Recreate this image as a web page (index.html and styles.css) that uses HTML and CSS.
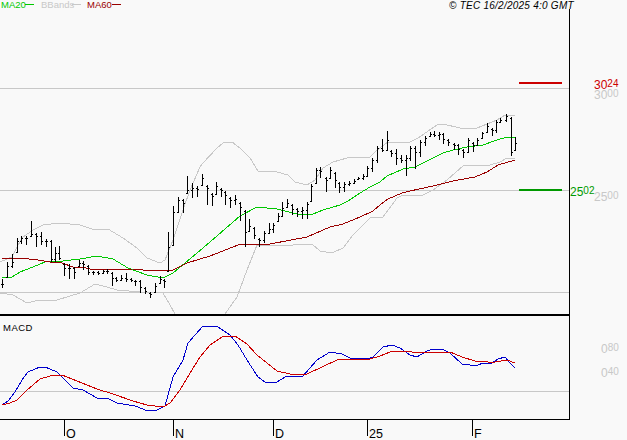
FILE: index.html
```html
<!DOCTYPE html>
<html lang="en">
<head>
    <meta charset="UTF-8">
    <title>Chart</title>
    <link rel="stylesheet" href="styles.css">
</head>
<body>
    <svg class="chart" width="627" height="440" viewBox="0 0 627 440" xmlns="http://www.w3.org/2000/svg">
        <!-- legend -->
        <text class="legend ma20" x="1" y="8">MA20</text>
        <path class="thin ma20-line" d="M25 4.5H34"/>
        <text class="legend bb" x="41" y="8">BBands</text>
        <path class="thin bb-line" d="M72 4.5H81"/>
        <text class="legend ma60" x="87" y="8">MA60</text>
        <path class="thin ma60-line" d="M112 4.5H121"/>
        <text class="copy" x="449" y="9.2">© TEC 16/2/2025 4:0 GMT</text>

        <!-- grid -->
        <path class="grid" d="M0 88.5H569M0 190.5H569M0 292.5H569M0 391.5H569"/>

        <!-- frame and time ticks -->
        <path class="frame" d="M569.5 9V419M0 419.5H570"/>
        <path class="sep" d="M0 315H570"/>
        <path class="frame" d="M64.5 419V436M173.5 419V436M273.5 419V436M367.5 419V436M472.5 419V436"/>
        <text class="axis" x="66" y="438">O</text>
        <text class="axis" x="175" y="438">N</text>
        <text class="axis" x="275" y="438">D</text>
        <text class="axis" x="369" y="438">25</text>
        <text class="axis" x="474" y="438">F</text>

        <!-- price levels -->
        <path class="level-hi" d="M519 83H562"/>
        <path class="level-lo" d="M519 190H562"/>
        <text class="val hi" x="594" y="89">30<tspan class="small" dy="-2">24</tspan></text>
        <text class="val lo" x="570" y="196">25<tspan class="small" dy="-2">02</tspan></text>
        <text class="val scale" x="594" y="99">30<tspan class="small" dy="-2">00</tspan></text>
        <text class="val scale" x="594" y="201">25<tspan class="small" dy="-2">00</tspan></text>
        <text class="val scale" x="601" y="353">0<tspan class="small" dy="-2">80</tspan></text>
        <text class="val scale" x="601" y="377">0<tspan class="small" dy="-2">40</tspan></text>

        <!-- bollinger bands -->
        <polyline class="line bb-line" points="0,262 12,257 17,247 23,237 33,230 43,225 60,223 80,225 92,229 108,229 123,238 137,248 147,258 160,263 165,260 173,240 183,210 190,190 200,167 203,163 217,148 223,143 232,142 240,148 250,158 258,171 277,172 288,175 295,182 307,185 315,180 323,168 333,162 347,158 370,157 377,150 388,142 410,142 418,138 437,125 443,124 460,128 477,128 497,120 505,115 515,116"/>
        <polyline class="line bb-line" points="0,293 13,295 27,303 35,301 57,300 80,293 95,284 107,287 117,290 140,292 163,293 170,305 175,314"/>
        <polyline class="line bb-line" points="225,314 237,297 247,270 257,245 273,245 293,245 312,244 320,251 332,253 343,248 353,235 370,218 383,217 397,198 403,195 423,195 433,190 447,180 463,166 490,165 500,162 507,158 515,158"/>

        <!-- moving averages -->
        <polyline class="line ma20-line" points="2,277 12,277 20,272 33,267 45,262 63,261 80,259 97,256 113,259 128,268 147,275 163,278 173,273 185,263 203,248 240,216 257,207 277,209 293,213 303,215 313,214 323,210 340,205 348,201 360,193 370,187 380,182 387,176 403,169 415,167 427,161 443,153 453,150 467,147 483,145 497,140 507,137 515,137"/>
        <polyline class="line ma60-line" points="2,259 20,258 38,260 50,262 62,263 73,267 83,267 93,270 133,269 143,270 160,271 173,270 187,263 210,256 238,245 270,244 307,237 330,227 343,224 360,217 373,211 380,205 388,199 402,193 410,191 433,186 453,181 475,177 487,172 498,165 515,160"/>

        <path class="bars" id="bars"/>

        <!-- macd -->
        <text class="macd-title" x="3" y="331">MACD</text>
        <polyline class="line macd-blue" points="2,405 8,401 15,392 22,380 28,372 40,367 45,367 57,372 65,380 73,388 83,390 97,398 107,398 117,403 135,406 148,411 157,410 165,406 173,377 183,360 188,343 203,326 210,326 218,327 230,335 238,345 247,360 258,377 265,382 275,383 287,376 303,376 310,368 317,360 330,352 342,354 350,358 367,359 373,357 383,347 392,345 400,348 410,355 417,357 420,355 427,351 433,349 442,349 450,353 462,364 470,365 478,365 483,363 492,363 498,359 505,357 509,362 515,368"/>
        <polyline class="line macd-red" points="2,405 10,403 17,400 27,390 40,379 50,376 62,375 77,381 97,389 113,394 133,401 147,405 163,407 170,403 180,390 190,373 200,357 210,345 222,337 235,336 247,344 257,355 267,363 277,371 290,374 307,374 322,367 337,360 350,359 370,359 380,356 390,352 403,351 420,353 432,352 450,352 462,357 475,361 488,362 495,362 507,360 515,363"/>
    </svg>

    <script src="chart.js"></script>
</body>
</html>
```
FILE: styles.css
```css
body {
    margin: 0;
    background-color: #f9f9f9;
    overflow: hidden;
}
.chart {
    display: block;
    font-family: "Liberation Sans", Arial, sans-serif;
}
.legend {
    font-size: 9.5px;
}
.legend.ma20 {
    fill: #00c800;
}
.legend.bb {
    fill: #c8c8c8;
}
.legend.ma60 {
    fill: #990000;
}
.copy {
    font-size: 10px;
    font-style: italic;
    letter-spacing: 0.25px;
    fill: #000;
}
.macd-title {
    font-size: 9.5px;
    letter-spacing: 0.5px;
    fill: #000;
}
.axis {
    font-size: 12.5px;
    fill: #000;
}
.val {
    font-size: 12px;
}
.val.hi {
    fill: #cc0000;
}
.val.lo {
    fill: #009900;
}
.val.scale {
    fill: #c8c8c8;
}
.val .small {
    font-size: 10px;
}
.grid {
    fill: none;
    stroke: #c8c8c8;
    stroke-width: 1;
}
.frame {
    fill: none;
    stroke: #000;
    stroke-width: 1;
}
.sep {
    fill: none;
    stroke: #000;
    stroke-width: 2;
}
.level-hi {
    stroke: #cc0000;
    stroke-width: 2;
}
.level-lo {
    stroke: #009900;
    stroke-width: 2;
}
.thin {
    fill: none;
    stroke-width: 1;
}
.line {
    fill: none;
    stroke-width: 1;
    stroke-linejoin: round;
    shape-rendering: crispEdges;
}
.ma20-line {
    stroke: #00c800;
}
.ma60-line {
    stroke: #990000;
}
.bb-line {
    stroke: #c8c8c8;
}
.macd-blue {
    stroke: #0000cc;
}
.macd-red {
    stroke: #cc0000;
}
.bars {
    fill: none;
    stroke: #000;
    stroke-width: 1.3;
    shape-rendering: crispEdges;
}
```
FILE: chart.js
```js
// x, high, low, close
var data = [
    [2,279,288,284],[7,262,278,266],[12,254,268,262],[17,238,253,241],[21,236,244,238],
    [26,236,245,238],[31,221,237,234],[36,233,247,236],[41,232,245,241],[46,239,247,241],
    [51,240,262,259],[55,247,262,253],[59,246,260,258],[64,263,276,268],[69,264,279,268],
    [74,267,279,272],[79,260,267,263],[83,261,270,264],[88,265,275,272],[93,271,275,272],
    [98,271,275,273],[103,270,274,271],[107,269,274,271],[112,272,286,278],[116,277,282,280],
    [121,275,281,278],[126,273,282,279],[131,278,282,280],[135,280,286,281],[140,280,293,287],
    [145,287,294,291],[150,292,298,294],[155,283,293,286],[160,276,284,279],[164,279,288,281],
    [168,232,272,247],[173,206,246,212],[178,197,213,200],[183,199,213,203],[187,176,194,190],
    [192,183,198,188],[197,186,197,189],[202,174,186,178],[207,185,205,188],[212,193,206,196],
    [216,182,195,186],[221,188,197,190],[225,191,205,195],[230,197,208,200],[235,195,205,199],
    [240,202,221,207],[245,210,247,232],[249,219,232,226],[254,227,239,235],[259,238,247,240],
    [264,231,243,233],[269,223,234,229],[273,223,233,225],[278,213,222,216],[282,202,217,208],
    [287,199,208,203],[292,204,215,209],[297,208,217,211],[302,207,219,210],[307,202,219,204],
    [311,184,202,186],[316,168,184,170],[320,167,178,171],[326,177,192,180],[330,167,179,170],
    [335,172,188,180],[339,182,193,187],[344,182,192,184],[349,181,186,183],[354,179,184,181],
    [358,177,180,178],[363,174,180,176],[367,166,177,168],[372,158,172,160],[377,146,163,148],
    [382,139,152,150],[387,131,151,140],[391,150,157,153],[396,149,165,158],[401,155,163,160],
    [406,155,176,158],[410,146,161,148],[415,146,169,152],[420,140,157,142],[425,136,146,138],
    [430,132,137,134],[434,131,137,135],[439,132,140,134],[443,133,144,139],[448,139,146,142],
    [454,143,150,145],[458,144,155,149],[463,149,158,152],[468,138,153,140],[473,142,152,145],
    [477,138,146,140],[482,132,139,133],[487,123,133,126],[492,128,136,130],[496,120,133,122],
    [500,118,123,120],[506,114,122,116],[511,117,156,152],[515,137,151,143]
];

var d = "";
var prev = null;
data.forEach(function (b) {
    var x = b[0] + 0.5;
    d += "M" + x + " " + b[1] + "V" + b[2];
    var open = prev === null ? b[3] : Math.min(Math.max(prev, b[1] + 1), b[2] - 1);
    d += "M" + (x - 1.5) + " " + (open + 0.5) + "h1.5";
    d += "M" + x + " " + (b[3] + 0.5) + "h1.5";
    prev = b[3];
});
document.getElementById("bars").setAttribute("d", d);
```
